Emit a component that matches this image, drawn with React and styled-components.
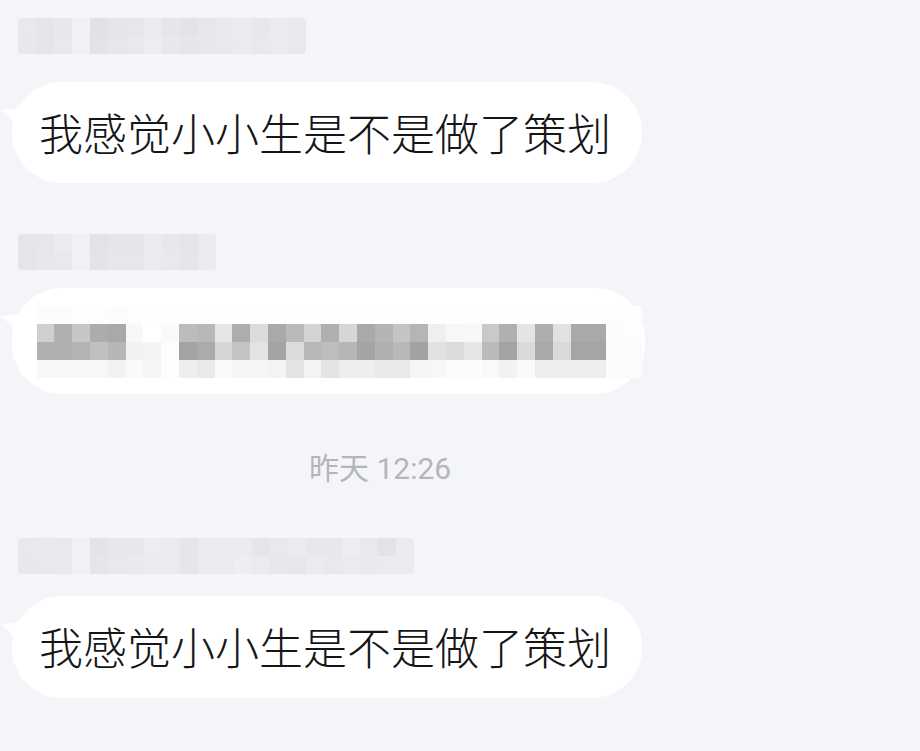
import styled, { createGlobalStyle } from "styled-components";

const GlobalStyle = createGlobalStyle`
  html, body {
    margin: 0;
    padding: 0;
    background: #f4f5f9;
  }
  body {
    font-family: "Noto Sans CJK SC", "Noto Sans", sans-serif;
  }
`;

const Page = styled.div`
  width: 920px;
  height: 751px;
  overflow: hidden;
  display: flex;
  flex-direction: column;
  padding-top: 18px;
  box-sizing: border-box;
  background: #f4f5f9;
`;

const Group = styled.div`
  display: flex;
  flex-direction: column;
  align-items: flex-start;
  gap: ${(p) => p.$gap}px;
  margin-top: ${(p) => p.$top || 0}px;
`;

const Mosaic = styled.div`
  display: grid;
  grid-template-columns: repeat(${(p) => p.$cols}, ${(p) => p.$cell}px);
  grid-auto-rows: 18px;
  margin-left: ${(p) => p.$left || 0}px;
  border-radius: ${(p) => p.$radius || 0}px;
  overflow: hidden;
`;

const Cell = styled.div`
  background: ${(p) => p.$c};
`;

const Bubble = styled.div`
  position: relative;
  margin-left: 12px;
  width: ${(p) => p.$w}px;
  height: ${(p) => p.$h}px;
  box-sizing: border-box;
  background: #ffffff;
  border-radius: 50px;
  display: flex;
  align-items: ${(p) => (p.$top ? "flex-start" : "center")};
  padding-left: ${(p) => p.$pl}px;
  padding-top: ${(p) => p.$top || 0}px;
`;

const Tail = styled.svg`
  position: absolute;
  left: -12px;
  top: 18px;
`;

const BubbleText = styled.span`
  font-family: "Noto Sans CJK SC", sans-serif;
  font-size: 44px;
  font-weight: 300;
  line-height: 1;
  color: #161616;
  margin-top: -2px;
  white-space: nowrap;
`;

const Stamp = styled.div`
  margin-top: 52px;
  padding-left: 309px;
  height: 40px;
  display: flex;
  align-items: center;
  font-family: Roboto, "Noto Sans CJK SC", sans-serif;
  font-size: 30px;
  color: #b6b6ba;
`;

const nameA = [
  ["#e9e9ed", "#e5e5e9", "#e8e8ec", "#f1f1f4", "#e2e2e6", "#e6e6ea", "#e7e7eb", "#ececf0", "#e6e6ea", "#e4e4e8", "#e7e7eb", "#eaeaee", "#ececf0", "#e8e8ec", "#ebebef", "#eaeaee"],
  ["#e8e8ec", "#e6e6ea", "#e9e9ed", "#f1f1f4", "#e3e3e7", "#e7e7eb", "#e9e9ed", "#ededf1", "#e8e8ec", "#e6e6ea", "#e8e8ec", "#e9e9ed", "#ebebef", "#e9e9ed", "#ebebef", "#e9e9ed"],
];

const nameB = [
  ["#e6e6ea", "#e7e7eb", "#ececf0", "#f1f1f4", "#e3e3e7", "#e6e6ea", "#e6e6ea", "#ebebef", "#e8e8ec", "#e5e5e9", "#ebebef"],
  ["#e5e5e9", "#e8e8ec", "#e9e9ed", "#f1f1f4", "#e4e4e8", "#e7e7eb", "#e7e7eb", "#ebebef", "#e9e9ed", "#e6e6ea", "#ebebef"],
];

const nameC = [
  ["#e9e9ed", "#eaeaee", "#e9e9ed", "#f1f1f4", "#e4e4e8", "#e8e8ec", "#e8e8ec", "#ededf1", "#ebebef", "#e6e6ea", "#ebebef", "#ebebef", "#ececf0", "#e6e6ea", "#e9e9ed", "#ebebef", "#e8e8ec", "#e8e8ec", "#ededf1", "#e9e9ed", "#e3e3e7", "#ebebef"],
  ["#e8e8ec", "#e9e9ed", "#eaeaee", "#f1f1f4", "#e6e6ea", "#e9e9ed", "#eaeaee", "#ececf0", "#ebebef", "#e6e6ea", "#ebebef", "#ebebef", "#eeeef1", "#ebebef", "#e8e8ec", "#e7e7eb", "#ebebef", "#e9e9ed", "#ebebef", "#eaeaee", "#ebebef", "#ececf0"],
];

const hex = (v) => {
  const h = v.toString(16).padStart(2, "0");
  return `#${h}${h}${h}`;
};

const hidden = [
  [252, 252, 253, 253, 252, 253, 254, 254, 253, 253, 254, 254, 253, 253, 254, 254, 253, 253, 254, 254, 253, 253, 254, 254, 253, 253, 254, 254, 253, 253, 254, 254, 253, 253],
  [207, 176, 198, 172, 169, 248, 255, 250, 188, 184, 230, 173, 220, 169, 186, 212, 176, 214, 169, 180, 196, 181, 239, 247, 248, 201, 176, 228, 173, 225, 169, 169, 252, 253],
  [176, 175, 179, 192, 182, 242, 244, 253, 163, 171, 214, 195, 227, 164, 220, 183, 189, 182, 164, 176, 184, 162, 226, 220, 230, 186, 163, 217, 169, 217, 165, 165, 251, 252],
  [247, 247, 247, 247, 242, 250, 246, 253, 238, 233, 250, 245, 245, 243, 228, 243, 228, 237, 238, 233, 233, 246, 247, 252, 252, 249, 242, 250, 238, 238, 238, 238, 252, 252],
].map((row) => row.map(hex));

const MosaicBlock = ({ rows, cell = 18, left, radius }) => (
  <Mosaic $cols={rows[0].length} $cell={cell} $left={left} $radius={radius}>
    {rows.flatMap((row, r) => row.map((c, i) => <Cell key={`${r}-${i}`} $c={c} />))}
  </Mosaic>
);

const BubbleTail = () => (
  <Tail width="26" height="40" viewBox="0 0 26 40">
    <path d="M26 2 C 20 8 12 10 0 10 C 10 16 16 26 26 38 Z" fill="#ffffff" />
  </Tail>
);

const App = () => {
  return (
    <Page>
      <GlobalStyle />
      <Group $gap={28}>
        <MosaicBlock rows={nameA} left={18} radius={3} />
        <Bubble $w={630} $h={101} $pl={27}>
          <BubbleTail />
          <BubbleText>我感觉小小生是不是做了策划</BubbleText>
        </Bubble>
      </Group>

      <Group $gap={18} $top={51}>
        <MosaicBlock rows={nameB} left={18} radius={3} />
        <Bubble $w={633} $h={106} $pl={24.7} $top={18}>
          <BubbleTail />
          <MosaicBlock rows={hidden} cell={17.8} />
        </Bubble>
      </Group>

      <Stamp>昨天 12:26</Stamp>

      <Group $gap={22} $top={52}>
        <MosaicBlock rows={nameC} left={18} radius={3} />
        <Bubble $w={630} $h={102} $pl={27}>
          <BubbleTail />
          <BubbleText>我感觉小小生是不是做了策划</BubbleText>
        </Bubble>
      </Group>
    </Page>
  );
};

export default App;
